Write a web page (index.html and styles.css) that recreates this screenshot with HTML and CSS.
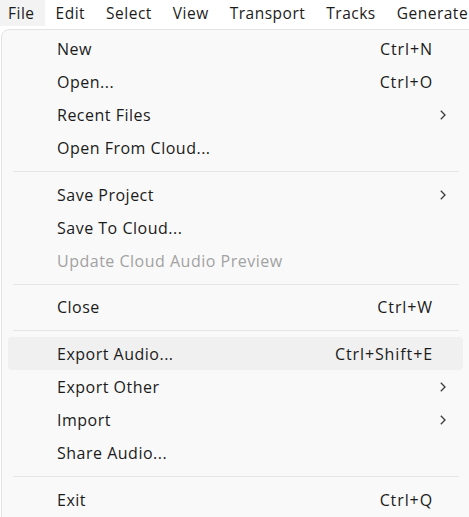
FILE: index.html
```html
<!DOCTYPE html>
<html>
<head>
<meta charset="utf-8">
<link rel="stylesheet" href="styles.css">
</head>
<body>
<div class="menubar">
  <span class="mb-item active">File</span>
  <span class="mb-item">Edit</span>
  <span class="mb-item">Select</span>
  <span class="mb-item">View</span>
  <span class="mb-item">Transport</span>
  <span class="mb-item">Tracks</span>
  <span class="mb-item">Generate</span>
</div>
<div class="menu">
  <div class="row"><span class="label">New</span><span class="key">Ctrl+N</span><span class="arrow"></span></div>
  <div class="row"><span class="label">Open...</span><span class="key">Ctrl+O</span><span class="arrow"></span></div>
  <div class="row"><span class="label">Recent Files</span><span class="key"></span><span class="arrow"><svg width="6" height="10" viewBox="0 0 6 10"><polyline points="0.8,0.8 5,5 0.8,9.2" fill="none" stroke="#3a3a3a" stroke-width="1.3"/></svg></span></div>
  <div class="row"><span class="label">Open From Cloud...</span><span class="key"></span><span class="arrow"></span></div>
  <div class="sep"></div>
  <div class="row"><span class="label">Save Project</span><span class="key"></span><span class="arrow"><svg width="6" height="10" viewBox="0 0 6 10"><polyline points="0.8,0.8 5,5 0.8,9.2" fill="none" stroke="#3a3a3a" stroke-width="1.3"/></svg></span></div>
  <div class="row"><span class="label">Save To Cloud...</span><span class="key"></span><span class="arrow"></span></div>
  <div class="row disabled"><span class="label">Update Cloud Audio Preview</span><span class="key"></span><span class="arrow"></span></div>
  <div class="sep"></div>
  <div class="row"><span class="label">Close</span><span class="key">Ctrl+W</span><span class="arrow"></span></div>
  <div class="sep"></div>
  <div class="row hover"><span class="label">Export Audio...</span><span class="key">Ctrl+Shift+E</span><span class="arrow"></span></div>
  <div class="row"><span class="label">Export Other</span><span class="key"></span><span class="arrow"><svg width="6" height="10" viewBox="0 0 6 10"><polyline points="0.8,0.8 5,5 0.8,9.2" fill="none" stroke="#3a3a3a" stroke-width="1.3"/></svg></span></div>
  <div class="row"><span class="label">Import</span><span class="key"></span><span class="arrow"><svg width="6" height="10" viewBox="0 0 6 10"><polyline points="0.8,0.8 5,5 0.8,9.2" fill="none" stroke="#3a3a3a" stroke-width="1.3"/></svg></span></div>
  <div class="row"><span class="label">Share Audio...</span><span class="key"></span><span class="arrow"></span></div>
  <div class="sep"></div>
  <div class="row"><span class="label">Exit</span><span class="key">Ctrl+Q</span><span class="arrow"></span></div>
</div>
</body>
</html>
```

FILE: styles.css
```css
html, body {
  margin: 0;
  padding: 0;
  background: #ffffff;
  overflow: hidden;
  width: 469px;
  height: 517px;
}
body {
  font-family: "Open Sans", "Noto Sans", sans-serif;
  font-size: 16px;
  letter-spacing: 0.5px;
  color: #1b1b1b;
}
.menubar {
  display: flex;
  height: 26px;
  align-items: stretch;
  white-space: nowrap;
  font-size: 15.5px;
}
.mb-item {
  display: flex;
  align-items: center;
  padding: 0 10.5px;
}
.mb-item:first-child {
  padding-left: 8px;
}
.mb-item.active {
  background: #f3f3f3;
}
.menu {
  margin-top: 3px;
  margin-left: 1px;
  width: 480px;
  height: 500px;
  box-sizing: border-box;
  background: #f9f9f9;
  border: 1px solid #e3e3e3;
  border-radius: 8px;
  padding: 2px 0 0 0;
}
.row {
  display: grid;
  grid-template-columns: 1fr auto 30px;
  align-items: center;
  height: 33.25px;
  margin: 0 0 0 6px;
  width: 455px;
  padding-left: 49px;
  box-sizing: border-box;
  border-radius: 4px;
}
.row.hover {
  background: #f0f0f0;
}
.row.disabled {
  color: #a2a2a2;
}
.key {
  text-align: right;
  letter-spacing: 0.9px;
}
.arrow {
  display: flex;
  align-items: center;
  padding-left: 7px;
}
.sep {
  height: 1px;
  background: #e5e5e5;
  margin: 6px 0 6px 11px;
  width: 446px;
}
```
